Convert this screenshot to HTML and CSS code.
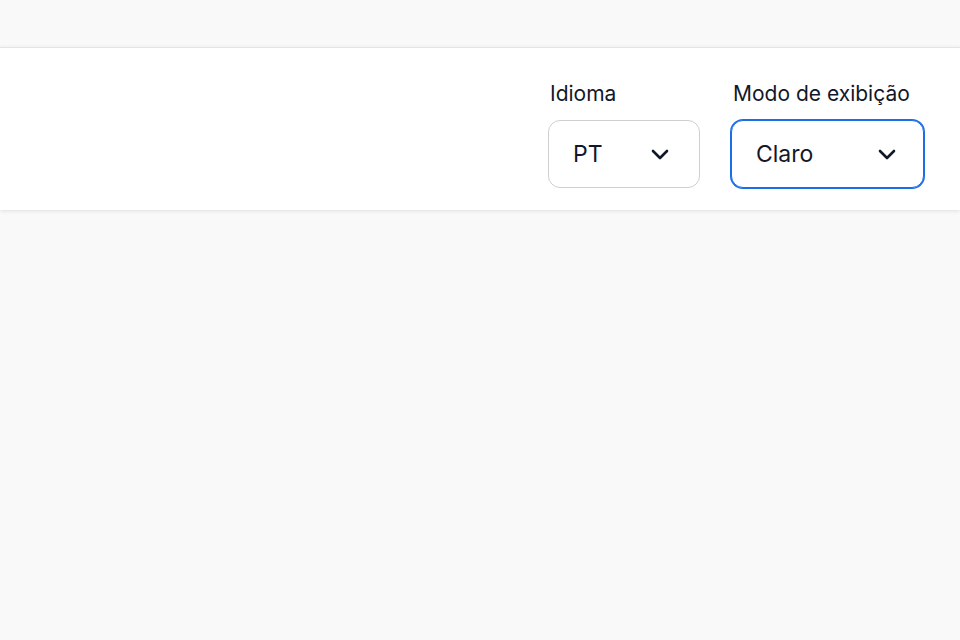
FILE: index.html
```html
<!DOCTYPE html>
<html lang="pt">
<head>
<meta charset="utf-8">
<title>Configurações</title>
<link rel="stylesheet" href="styles.css">
</head>
<body>
<div class="page">
  <header class="toolbar">
    <div class="field">
      <span class="label">Idioma</span>
      <div class="select select-lang">
        <span class="value">PT</span>
        <svg class="chev" width="18" height="11" viewBox="0 0 18 11"><path d="M2 2l7 7 7-7" fill="none" stroke="#111827" stroke-width="2.6" stroke-linecap="round" stroke-linejoin="round"/></svg>
      </div>
    </div>
    <div class="field">
      <span class="label">Modo de exibição</span>
      <div class="select select-mode focused">
        <span class="value">Claro</span>
        <svg class="chev" width="18" height="11" viewBox="0 0 18 11"><path d="M2 2l7 7 7-7" fill="none" stroke="#111827" stroke-width="2.6" stroke-linecap="round" stroke-linejoin="round"/></svg>
      </div>
    </div>
  </header>
</div>
</body>
</html>
```
FILE: styles.css
```css
html, body {
  margin: 0;
  padding: 0;
  background: #f9f9f9;
  font-family: Inter, "Noto Sans", sans-serif;
  color: #121829;
}
.page {
  padding-top: 47px;
  min-height: 640px;
  box-sizing: border-box;
}
.toolbar {
  background: #fff;
  border-top: 1px solid #e4e4e4;
  box-shadow: 0 1px 4px rgba(0, 0, 0, 0.11);
  height: 163px;
  box-sizing: border-box;
  display: flex;
  justify-content: flex-end;
  align-items: flex-start;
  gap: 31px;
  padding: 34px 36px 0 0;
}
.field {
  display: flex;
  flex-direction: column;
  gap: 14px;
}
.label {
  font-size: 21px;
  line-height: 24px;
  padding-left: 2px;
}
.select {
  height: 68px;
  box-sizing: border-box;
  border: 1px solid #cfcfcf;
  border-radius: 12px;
  display: flex;
  align-items: center;
  justify-content: space-between;
  font-size: 23px;
  background: #fff;
}
.select-lang {
  width: 152px;
  padding: 0 30px 0 24px;
}
.select-mode {
  width: 193px;
  padding: 0 27px 0 24px;
}
.focused {
  border-color: #1a6fe6;
  box-shadow: 0 0 0 1px #1a6fe6;
}
.chev {
  display: block;
}
```
